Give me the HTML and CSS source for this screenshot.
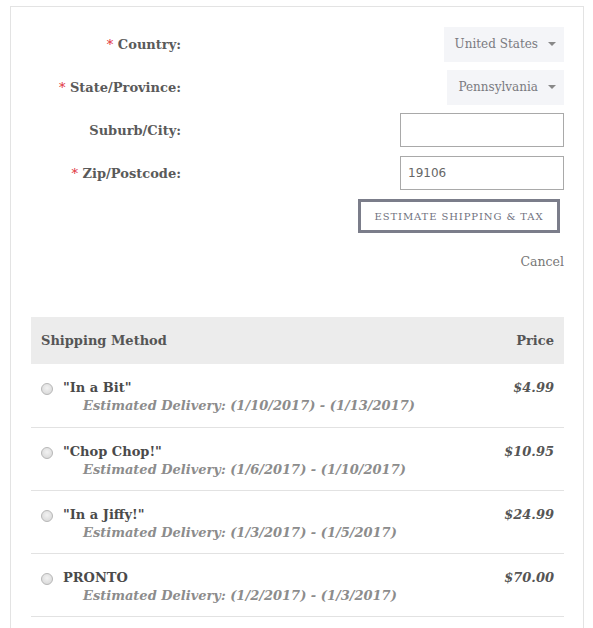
FILE: index.html
```html
<!DOCTYPE html>
<html lang="en">

<head>
    <meta charset="UTF-8">
    <title>Estimate Shipping</title>
    <link rel="stylesheet" href="styles.css">
</head>

<body>
    <div class="panel">
        <div class="form-row">
            <label class="form-label"><span class="req">*</span> Country:</label>
            <div class="form-field">
                <div class="fake-select">United States<span class="caret"></span></div>
            </div>
        </div>
        <div class="form-row">
            <label class="form-label"><span class="req">*</span> State/Province:</label>
            <div class="form-field">
                <div class="fake-select">Pennsylvania<span class="caret"></span></div>
            </div>
        </div>
        <div class="form-row">
            <label class="form-label">Suburb/City:</label>
            <div class="form-field">
                <input class="text-input" type="text" value="">
            </div>
        </div>
        <div class="form-row">
            <label class="form-label"><span class="req">*</span> Zip/Postcode:</label>
            <div class="form-field">
                <input class="text-input" type="text" value="19106">
            </div>
        </div>
        <div class="actions">
            <button class="estimate-button">Estimate Shipping &amp; Tax</button>
        </div>
        <div class="cancel-row">
            <a class="cancel-link" href="#">Cancel</a>
        </div>

        <table class="shipping-table">
            <thead>
                <tr>
                    <th class="col-method">Shipping Method</th>
                    <th class="col-price">Price</th>
                </tr>
            </thead>
            <tbody>
                <tr>
                    <td class="col-method">
                        <div class="method">
                            <span class="radio"></span>
                            <div>
                                <div class="method-name">"In a Bit"</div>
                                <div class="method-eta">Estimated Delivery: (1/10/2017) - (1/13/2017)</div>
                            </div>
                        </div>
                    </td>
                    <td class="col-price">$4.99</td>
                </tr>
                <tr>
                    <td class="col-method">
                        <div class="method">
                            <span class="radio"></span>
                            <div>
                                <div class="method-name">"Chop Chop!"</div>
                                <div class="method-eta">Estimated Delivery: (1/6/2017) - (1/10/2017)</div>
                            </div>
                        </div>
                    </td>
                    <td class="col-price">$10.95</td>
                </tr>
                <tr>
                    <td class="col-method">
                        <div class="method">
                            <span class="radio"></span>
                            <div>
                                <div class="method-name">"In a Jiffy!"</div>
                                <div class="method-eta">Estimated Delivery: (1/3/2017) - (1/5/2017)</div>
                            </div>
                        </div>
                    </td>
                    <td class="col-price">$24.99</td>
                </tr>
                <tr>
                    <td class="col-method">
                        <div class="method">
                            <span class="radio"></span>
                            <div>
                                <div class="method-name">PRONTO</div>
                                <div class="method-eta">Estimated Delivery: (1/2/2017) - (1/3/2017)</div>
                            </div>
                        </div>
                    </td>
                    <td class="col-price">$70.00</td>
                </tr>
            </tbody>
        </table>
    </div>
</body>

</html>
```

FILE: styles.css
```css
/* Global settings */
*, *::before, *::after {
    box-sizing: border-box;
}

html,
body {
    margin: 0;
    padding: 0;
    background: #fff;
    font-family: "DejaVu Serif", Georgia, serif;
    color: #555;
    overflow: hidden;
}

.panel {
    margin: 6px 0 0 10px;
    width: 574px;
    height: 640px;
    border: 1px solid #e3e3e3;
    padding: 20px 19px 0 20px;
}

/* Form */
.form-row {
    display: flex;
    align-items: center;
    height: 34px;
    margin-bottom: 9px;
}

.form-label {
    width: 150px;
    text-align: right;
    font-weight: bold;
    font-size: 13px;
    color: #5a5a5a;
}

.req {
    color: #e0303a;
    font-weight: normal;
}

.form-field {
    flex: 1;
    display: flex;
    justify-content: flex-end;
}

.fake-select {
    display: flex;
    align-items: center;
    height: 35px;
    padding: 0 8px 0 11px;
    background: #f4f5f8;
    color: #7a7a80;
    font-size: 12px;
    white-space: pre;
}

.caret {
    margin-left: 10px;
    width: 0;
    height: 0;
    border-left: 4px solid transparent;
    border-right: 4px solid transparent;
    border-top: 4px solid #888;
}

.text-input {
    width: 164px;
    height: 34px;
    border: 1px solid #a9a9a9;
    padding: 0 7px;
    font-family: "DejaVu Sans", sans-serif;
    font-size: 12px;
    color: #666;
    outline: none;
}

.actions {
    display: flex;
    justify-content: flex-end;
    padding-right: 4px;
}

.estimate-button {
    width: 202px;
    height: 34px;
    border: 3px solid #7b7d8a;
    background: #fff;
    color: #6f717e;
    font-family: "DejaVu Serif", serif;
    font-size: 10px;
    letter-spacing: 0.9px;
    text-transform: uppercase;
    cursor: pointer;
}

.cancel-row {
    display: flex;
    justify-content: flex-end;
    margin-top: 21px;
    height: 20px;
}

.cancel-link {
    color: #777;
    font-size: 12.5px;
    text-decoration: none;
}

/* Shipping table */
.shipping-table {
    margin-top: 43px;
    width: 533px;
    border-collapse: collapse;
}

.shipping-table th {
    background: #ececec;
    height: 47px;
    padding: 0 10px;
    font-size: 13px;
    font-weight: bold;
    color: #555;
    text-align: left;
}

.shipping-table th.col-price {
    text-align: right;
}

.shipping-table td {
    height: 63px;
    border-bottom: 1px solid #e2e2e2;
    padding: 15px 10px 0;
    vertical-align: top;
    line-height: 18px;
}

.method {
    display: flex;
    align-items: flex-start;
}

.radio {
    flex: none;
    width: 12px;
    height: 12px;
    margin-top: 4px;
    margin-right: 10px;
    border-radius: 50%;
    border: 1px solid #b8b8b8;
    background: radial-gradient(circle at 50% 40%, #f2f2f2, #d4d4d4);
}

.method-name {
    font-weight: bold;
    font-size: 13px;
    color: #4a4a4a;
}

.method-eta {
    padding-left: 20px;
    font-weight: bold;
    font-style: italic;
    font-size: 13px;
    color: #8c8c8c;
}

td.col-price {
    text-align: right;
    font-weight: bold;
    font-style: italic;
    font-size: 13px;
    color: #555;
}
```
